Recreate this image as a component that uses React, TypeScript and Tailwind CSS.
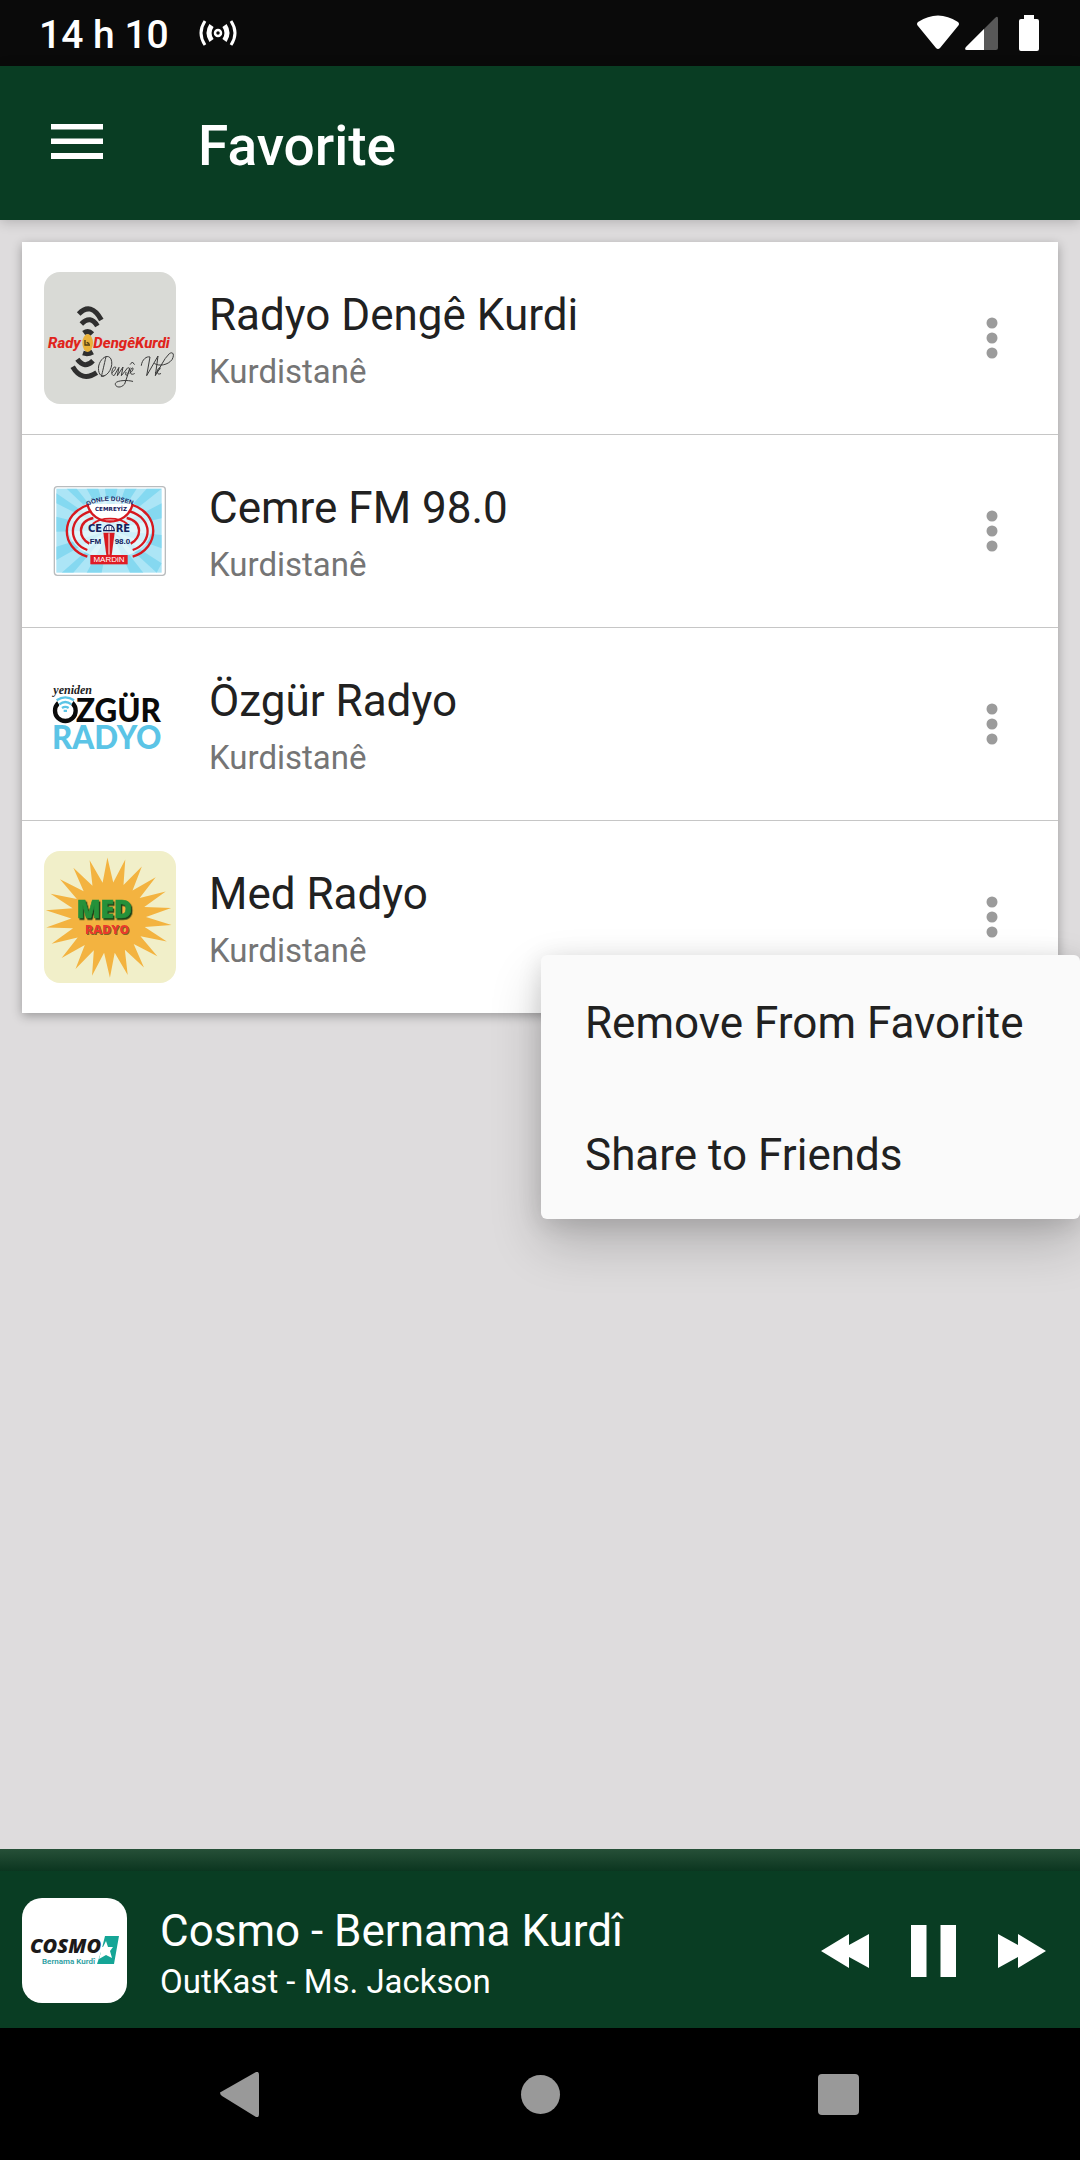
import { useState } from 'react'
import type { ReactNode } from 'react'

type Station = {
    name: string
    region: string
    logo: ReactNode
}

// 22 point star, long rays alternate with the inner radius
const sunPoints = Array.from({ length: 44 }, (_, i) => {
    const r = i % 2 === 0 ? 190 : 112
    const a = (Math.PI * i) / 22 - 0.02
    return `${236 + r * Math.sin(a)},${233 - r * Math.cos(a) * 0.95}`
}).join(' ')

function DengeKurdiLogo() {
    return (
        <svg viewBox="42 36 396 396" className="size-full" aria-hidden="true">
            <rect x="42" y="36" width="396" height="396" fill="#d9dad6" />
            <g fill="none" stroke="#2f2f2f" strokeWidth="15">
                <path d="M146 162Q183 124 214 180" />
                <path d="M154 192Q182 164 202 198" />
                <path d="M161 219Q175 209 187 222" />
                <path d="M159 279Q174 284 188 276" />
                <path d="M142 298Q164 328 189 302" />
                <path d="M128 320Q156 368 200 338" />
            </g>
            <g fill="#e0241c" fontFamily="Roboto" fontWeight="800" fontStyle="italic" fontSize="45">
                <text x="54" y="265">Rady</text>
                <text x="190" y="265">DengêKurdi</text>
            </g>
            <ellipse cx="173" cy="249" rx="16" ry="27" fill="#e9b23a" />
            <path d="M165 240V255H180M170 247L178 251" fill="none" stroke="#4c3a14" strokeWidth="4" />
            <g fill="none" stroke="#3a3a3a" strokeWidth="3" strokeLinecap="round">
                <path d="M228 290C222 315 218 335 214 349C235 350 252 318 243 297C235 281 212 292 206 318C203 338 212 352 222 348" />
                <path d="M246 338C258 330 260 318 253 321C243 328 243 350 253 346L267 322L262 347L279 321L274 347L288 330C294 318 302 323 296 335C290 350 284 348 288 337M300 324L284 372C270 388 254 380 256 370C262 360 294 360 308 364M300 339C310 333 312 322 306 324C298 332 299 349 313 341M301 313L307 306L313 313" />
                <path d="M334 316C336 298 350 288 360 291L350 347L384 288L376 347C390 325 400 298 418 281C430 273 434 285 426 299C414 315 388 320 374 311M376 338C388 333 394 323 388 323C380 328 378 348 392 341" />
            </g>
        </svg>
    )
}

function CemreLogo() {
    const rays = ['79,130 79,100 240,210', '110,86 140,86 240,210', '170,86 205,86 240,210', '225,86 262,86 240,210', '285,86 320,86 240,210', '350,86 395,86 240,210', '395,130 395,175 240,210', '395,225 395,265 240,210', '395,310 380,338 240,210', '340,338 300,338 240,210', '215,338 170,338 240,210', '130,338 95,338 240,210', '79,300 79,260 240,210', '79,215 79,170 240,210']
    return (
        <svg viewBox="42 15 396 396" className="size-full" aria-hidden="true">
            <rect x="73" y="80" width="333" height="266" rx="9" fill="#fff" stroke="#b9bcbe" strokeWidth="4" />
            <rect x="79" y="86" width="316" height="252" fill="#ace5f6" />
            <g fill="#56c9ea" opacity="0.45">
                {rays.map((r) => (
                    <polygon key={r} points={r} />
                ))}
            </g>
            <ellipse cx="240" cy="205" rx="125" ry="90" fill="#fff" opacity="0.6" />
            <g fill="none" stroke="#d71920" strokeWidth="7">
                <path d="M178 134C88 160 90 265 172 290M304 134C392 160 390 265 308 290" />
                <path d="M180 154C112 175 114 250 172 270M300 154C370 175 368 250 308 270" />
                <path d="M190 174C140 185 145 235 178 251M290 174C340 185 335 235 302 251" />
                <path d="M172 132C188 202 292 202 308 132" fill="#fff" />
                <path d="M188 192C202 180 220 176 240 176C260 176 278 180 292 192" strokeWidth="5" />
            </g>
            <path d="M220 218H254L245 286H229Z" fill="#d71920" />
            <path d="M237 220V284" stroke="#fff" strokeWidth="3" />
            <path d="M221 212A16 17 0 0 1 253 212Z" fill="#fff" stroke="#14205c" strokeWidth="4" />
            <path d="M237 196V214M229 200V213M245 200V213" stroke="#14205c" strokeWidth="2" />
            <path id="cemre-arc" d="M172 138Q242 104 330 144" fill="none" />
            <g fill="#14205c" fontFamily="'Liberation Sans'" fontWeight="700">
                <text fontSize="19">
                    <textPath href="#cemre-arc">GÖNLE DÜŞEN</textPath>
                </text>
                <text x="243" y="154" fontSize="17" textAnchor="middle" fontFamily="'DejaVu Sans'">CEMREYİZ</text>
                <text x="174" y="216" fontSize="30" fontFamily="'DejaVu Sans'">CE</text>
                <text x="257" y="216" fontSize="30" fontFamily="'DejaVu Sans'">RE</text>
                <text x="179" y="251" fontSize="24">FM</text>
                <text x="254" y="251" fontSize="24">98.0</text>
            </g>
            <rect x="181" y="285" width="112" height="28" fill="#e01b24" />
            <text x="237" y="307" fontSize="24" textAnchor="middle" fill="#fff" fontFamily="'Liberation Sans'">MARDiN</text>
        </svg>
    )
}

function OzgurLogo() {
    return (
        <svg viewBox="42 -6 396 396" className="size-full" aria-hidden="true">
            <text x="70" y="103" fontSize="36" fontFamily="'Liberation Serif'" fontWeight="700" fontStyle="italic" fill="#222">yeniden</text>
            <circle cx="106" cy="152" r="31" fill="none" stroke="#0a0a0a" strokeWidth="13" />
            <path d="M84 128L78 116Q106 100 134 116L112 156H100Z" fill="#fff" />
            <g fill="none" stroke="#5bc4e6" strokeWidth="7">
                <path d="M80 121Q106 103 132 121" />
                <path d="M88 133Q106 119 124 133" />
                <path d="M96 144Q106 137 116 144" />
            </g>
            <path d="M101 149H111V156H101Z" fill="#5bc4e6" />
            <g fontFamily="Lato" fontWeight="900" fontSize="94">
                <text x="138" y="187" fill="#0a0a0a">ZGÜR</text>
                <text x="66" y="268" fill="#5bc4e6">RADYO</text>
            </g>
        </svg>
    )
}

function MedLogo() {
    return (
        <svg viewBox="42 33 396 396" className="size-full" aria-hidden="true">
            <rect x="42" y="33" width="396" height="396" fill="#f1efc9" />
            <polygon points={sunPoints} fill="#f3b340" />
            <g fontFamily="'Open Sans'" fontWeight="800">
                <text
                    x="140"
                    y="234"
                    fontSize="74"
                    fill="#25913a"
                    stroke="#25913a"
                    strokeWidth="2"
                    className="drop-shadow-[4px_5px_0_#173d17]"
                >
                    MED
                </text>
                <text x="165" y="283" fontSize="37" fill="#ea3a2c" className="drop-shadow-[3px_3px_0_#7f6a24]">
                    RADYO
                </text>
            </g>
        </svg>
    )
}

function CosmoLogo() {
    return (
        <svg viewBox="0 0 105 105" className="size-full" aria-hidden="true">
            <rect width="105" height="105" fill="#fff" />
            <path d="M83 38H97L92 66H75L79 54Z" fill="#15a596" />
            <path d="M84 43L86 49L91 49L88 53L90 60L84 57L77 61L79 54L74 49L81 49Z" fill="#fff" />
            <text x="8" y="55" fontSize="20" fontFamily="'Open Sans'" fontWeight="800" fontStyle="italic" fill="#1d1a1a">COSMO</text>
            <text x="20" y="66" fontSize="8" fontFamily="Roboto" fontWeight="600" fill="#2a9da0">Bernama Kurdî</text>
        </svg>
    )
}

const stations: Station[] = [
    { name: 'Radyo Dengê Kurdi', region: 'Kurdistanê', logo: <DengeKurdiLogo /> },
    { name: 'Cemre FM 98.0', region: 'Kurdistanê', logo: <CemreLogo /> },
    { name: 'Özgür Radyo', region: 'Kurdistanê', logo: <OzgurLogo /> },
    { name: 'Med Radyo', region: 'Kurdistanê', logo: <MedLogo /> },
]

function StatusBar() {
    return (
        <div className="flex h-[66px] items-center justify-between bg-[#0a0a0a] pl-[39px] pr-[41px] text-white">
            <div className="flex items-center gap-[30px]">
                <span className="pt-1 text-[39px] leading-[46px] font-medium">14 h 10</span>
                <svg width="38" height="28" viewBox="0 0 38 28" fill="none" stroke="currentColor" aria-hidden="true">
                    <circle cx="19" cy="14" r="3" strokeWidth="2.5" />
                    <path d="M12.500 6.500Q7.500 14 12.500 21.500M25.500 6.500Q30.500 14 25.500 21.500" strokeWidth="5" />
                    <path d="M6 2Q-2 14 6 26M32 2Q40 14 32 26" strokeWidth="3" />
                </svg>
            </div>
            <div className="flex items-center">
                <svg width="42" height="36" viewBox="0 0 42 36" fill="currentColor" aria-hidden="true">
                    <path d="M1 7Q21 -6 41 7Q43 9 41 11L23 33Q21 35 19 33L1 11Q-1 9 1 7Z" />
                </svg>
                <svg width="33" height="36" viewBox="0 0 33 36" className="ml-1.5" aria-hidden="true">
                    <path d="M1 32L30 3Q33 0 33 4V33Q33 35 31 35H2Q-1 35 1 32Z" fill="#585858" />
                    <path d="M1 32L19 14V35H2Q-1 35 1 32Z" fill="#fff" />
                </svg>
                <svg width="20" height="36" viewBox="0 0 20 36" fill="currentColor" className="ml-[21px]" aria-hidden="true">
                    <path d="M5 0H15V4H18Q20 4 20 6V34Q20 36 18 36H2Q0 36 0 34V6Q0 4 2 4H5Z" />
                </svg>
            </div>
        </div>
    )
}

function Header() {
    return (
        <header className="relative z-10 flex h-[154px] items-center bg-[#093d23] pb-1 pl-[51px] text-white shadow-[0_2px_12px_rgba(0,0,0,0.2)]">
            <button aria-label="Open menu">
                <svg width="52" height="35" viewBox="0 0 52 35" fill="currentColor" aria-hidden="true">
                    <path d="M0 0H52V5.5H0ZM0 14.5H52V20H0ZM0 29H52V35H0Z" />
                </svg>
            </button>
            <h1 className="ml-[95px] pt-2.5 text-[55px] leading-[64px] font-medium">Favorite</h1>
        </header>
    )
}

function StationRow({ station, open, onToggle }: { station: Station; open: boolean; onToggle: () => void }) {
    return (
        <li className="relative border-b border-[#c6c6c6] bg-white last:border-0">
            <div className="flex h-48 items-center pl-[22px]">
                <div className="size-[132px] shrink-0 overflow-hidden rounded-2xl">{station.logo}</div>
                <div className="ml-[33px] min-w-0 flex-1 pt-1">
                    <p className="text-[44px] leading-[52px] text-[#212121]">{station.name}</p>
                    <p className="mt-[11px] text-[33px] leading-[39px] text-[#757575]">{station.region}</p>
                </div>
                <button
                    aria-label={`Options for ${station.name}`}
                    aria-expanded={open}
                    onClick={onToggle}
                    className="flex h-full w-[132px] items-center justify-center"
                >
                    <svg width="12" height="42" viewBox="0 0 12 42" fill="#9b9b9b" aria-hidden="true">
                        <circle cx="6" cy="6" r="5.5" />
                        <circle cx="6" cy="21" r="5.5" />
                        <circle cx="6" cy="36" r="5.5" />
                    </svg>
                </button>
            </div>
            {open && (
                <div
                    role="menu"
                    className="absolute top-[134px] -right-[22px] z-20 w-[539px] rounded-md bg-[#fafafa] shadow-[0_24px_52px_rgba(0,0,0,0.2),0_4px_24px_rgba(0,0,0,0.12)]"
                >
                    <button role="menuitem" className="flex h-[132px] w-full items-center pl-11 pt-1 text-[44px] leading-[52px] text-[#212121]">
                        Remove From Favorite
                    </button>
                    <button role="menuitem" className="flex h-[132px] w-full items-center pl-11 pt-1 text-[44px] leading-[52px] text-[#212121]">
                        Share to Friends
                    </button>
                </div>
            )}
        </li>
    )
}

function Player() {
    return (
        <section className="bg-[#093d23] text-white">
            <div className="h-[22px] bg-linear-to-b from-[#265038] to-[#0b3620]" />
            <div className="flex h-[157px] items-center pt-0.5 pl-[22px] pr-[34px]">
                <div className="size-[105px] shrink-0 overflow-hidden rounded-[20px]">
                    <CosmoLogo />
                </div>
                <div className="ml-[33px] min-w-0 flex-1 pt-2">
                    <p className="text-[44px] leading-[52px]">Cosmo - Bernama Kurdî</p>
                    <p className="mt-[3px] text-[33px] leading-[44px]">OutKast - Ms. Jackson</p>
                </div>
                <div className="flex items-center gap-[42px]">
                    <button aria-label="Previous">
                        <svg width="48" height="34" viewBox="0 0 48 34" fill="currentColor" aria-hidden="true">
                            <path d="M0 17L28 0V11L48 0V34L28 23V34Z" />
                        </svg>
                    </button>
                    <button aria-label="Pause">
                        <svg width="45" height="52" viewBox="0 0 45 52" fill="currentColor" aria-hidden="true">
                            <path d="M0 0H15.500V52H0ZM29.500 0H45V52H29.500Z" />
                        </svg>
                    </button>
                    <button aria-label="Next">
                        <svg width="48" height="34" viewBox="0 0 48 34" fill="currentColor" aria-hidden="true">
                            <path d="M48 17L20 0V11L0 0V34L20 23V34Z" />
                        </svg>
                    </button>
                </div>
            </div>
        </section>
    )
}

function NavigationBar() {
    return (
        <nav className="flex h-[132px] items-center justify-center gap-[255px] bg-black text-[#999]">
            <button aria-label="Back">
                <svg width="45" height="45" viewBox="0 0 45 45" fill="currentColor" aria-hidden="true">
                    <path d="M2 20.500L38 0Q41 -1 41 3V42Q41 46 38 45L4 24Q2 22.500 2 20.500Z" />
                </svg>
            </button>
            <button aria-label="Home">
                <svg width="45" height="45" viewBox="0 0 45 45" fill="currentColor" aria-hidden="true">
                    <circle cx="22.500" cy="22.500" r="19.500" />
                </svg>
            </button>
            <button aria-label="Recent apps">
                <svg width="45" height="45" viewBox="0 0 45 45" fill="currentColor" aria-hidden="true">
                    <rect x="0" y="2" width="41" height="41" rx="4" />
                </svg>
            </button>
        </nav>
    )
}

export default function App() {
    const [openMenu, setOpenMenu] = useState<number | null>(3)

    return (
        <div className="flex min-h-screen flex-col overflow-x-hidden bg-[#dedcdd] font-[Roboto,sans-serif]">
            <StatusBar />
            <Header />
            <main className="flex-1 px-[22px] pt-[22px]">
                <ul className="bg-white shadow-[0_3px_10px_rgba(0,0,0,0.3)]">
                    {stations.map((station, i) => (
                        <StationRow
                            key={station.name}
                            station={station}
                            open={openMenu === i}
                            onToggle={() => setOpenMenu(openMenu === i ? null : i)}
                        />
                    ))}
                </ul>
            </main>
            <Player />
            <NavigationBar />
        </div>
    )
}
